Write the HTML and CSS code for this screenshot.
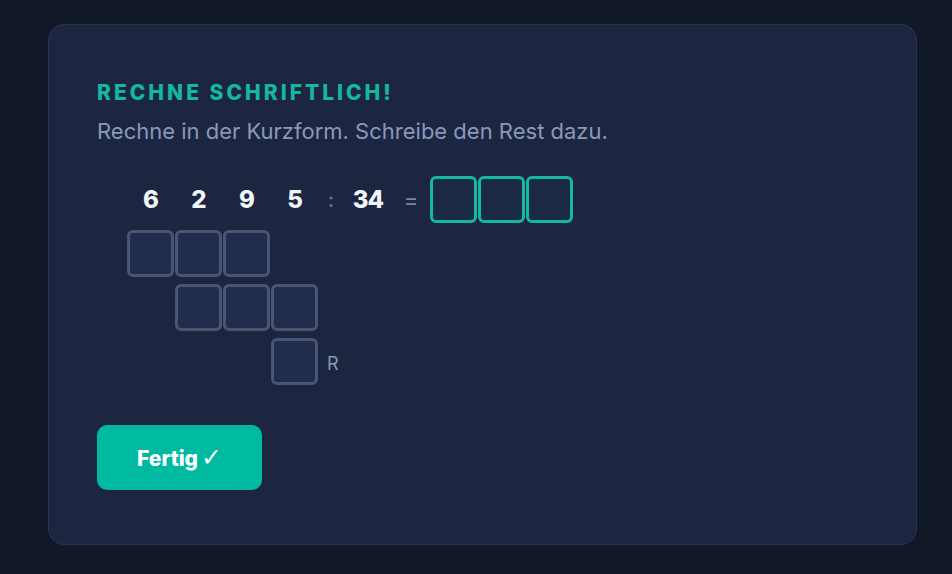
FILE: index.html
```html
<!DOCTYPE html>
<html lang="de">
<head>
    <meta charset="UTF-8" />
    <meta name="viewport" content="width=device-width, initial-scale=1" />
    <title>Rechne schriftlich</title>
    <link rel="stylesheet" href="styles.css">
</head>
<body>
    <div class="card">
        <h2 class="task-title">RECHNE SCHRIFTLICH!</h2>
        <p class="task-text">Rechne in der Kurzform. Schreibe den Rest dazu.</p>

        <div class="division">
            <div class="row">
                <span class="digit">6</span>
                <span class="digit">2</span>
                <span class="digit">9</span>
                <span class="digit">5</span>
                <span class="colon">:</span>
                <span class="divisor">34</span>
                <span class="equals">=</span>
                <div class="answer">
                    <div class="box box-answer"></div>
                    <div class="box box-answer"></div>
                    <div class="box box-answer"></div>
                </div>
            </div>
            <div class="row boxes">
                <div class="box"></div>
                <div class="box"></div>
                <div class="box"></div>
            </div>
            <div class="row boxes shift-1">
                <div class="box"></div>
                <div class="box"></div>
                <div class="box"></div>
            </div>
            <div class="row boxes shift-3">
                <div class="box"></div>
                <span class="rest">R</span>
            </div>
        </div>

        <button class="done-btn">Fertig<span class="check">✓</span></button>
    </div>
</body>
</html>
```

FILE: styles.css
```css
body {
    font-family: "Inter", "DejaVu Sans", sans-serif;
    background-color: #111827;
    margin: 0;
    padding: 24px 35px 0 48px;
}
.card {
    background: #1c2640;
    border: 1px solid #2a3452;
    border-radius: 16px;
    padding: 56px 48px 54px;
}
.task-title {
    margin: 0;
    font-size: 21px;
    line-height: 24px;
    font-weight: 800;
    letter-spacing: 3px;
    color: #13b8a0;
}
.task-text {
    margin: 12px 0 0;
    font-size: 22px;
    line-height: 28px;
    color: #8a98ba;
}
.division {
    margin: 31px 0 0 30px;
    display: flex;
    flex-direction: column;
    gap: 7px;
}
.row {
    display: flex;
    align-items: center;
}
.boxes {
    gap: 1px;
}
.shift-1 {
    margin-left: 48px;
}
.shift-3 {
    margin-left: 144px;
}
.digit {
    width: 48px;
    text-align: center;
    font-size: 24px;
    font-weight: 800;
    color: #f1f5f9;
}
.colon {
    width: 24px;
    text-align: center;
    font-size: 20px;
    font-weight: 600;
    color: #5f6d8e;
}
.divisor {
    width: 50px;
    text-align: center;
    font-size: 24px;
    font-weight: 800;
    letter-spacing: -1px;
    color: #f1f5f9;
}
.equals {
    width: 36px;
    text-align: center;
    font-size: 22px;
    color: #7c89a8;
}
.answer {
    display: flex;
    gap: 1px;
    margin-left: 1px;
}
.box {
    width: 47px;
    height: 47px;
    box-sizing: border-box;
    background: #222d4d;
    border: 3px solid #4a5572;
    border-radius: 6px;
}
.box-answer {
    background: #1a2a42;
    border: 3px solid #12b8a0;
}
.rest {
    margin-left: 8px;
    margin-top: 4px;
    font-size: 18px;
    color: #8a98ba;
}
.done-btn {
    margin-top: 40px;
    width: 165px;
    height: 65px;
    background-color: #00b9a1;
    border: none;
    border-radius: 10px;
    color: white;
    font-family: "Inter", sans-serif;
    font-size: 21px;
    font-weight: 800;
    cursor: pointer;
}
.check {
    margin-left: 3px;
    font-family: "DejaVu Sans", sans-serif;
    font-weight: normal;
    font-size: 25px;
    line-height: 1;
}
```
